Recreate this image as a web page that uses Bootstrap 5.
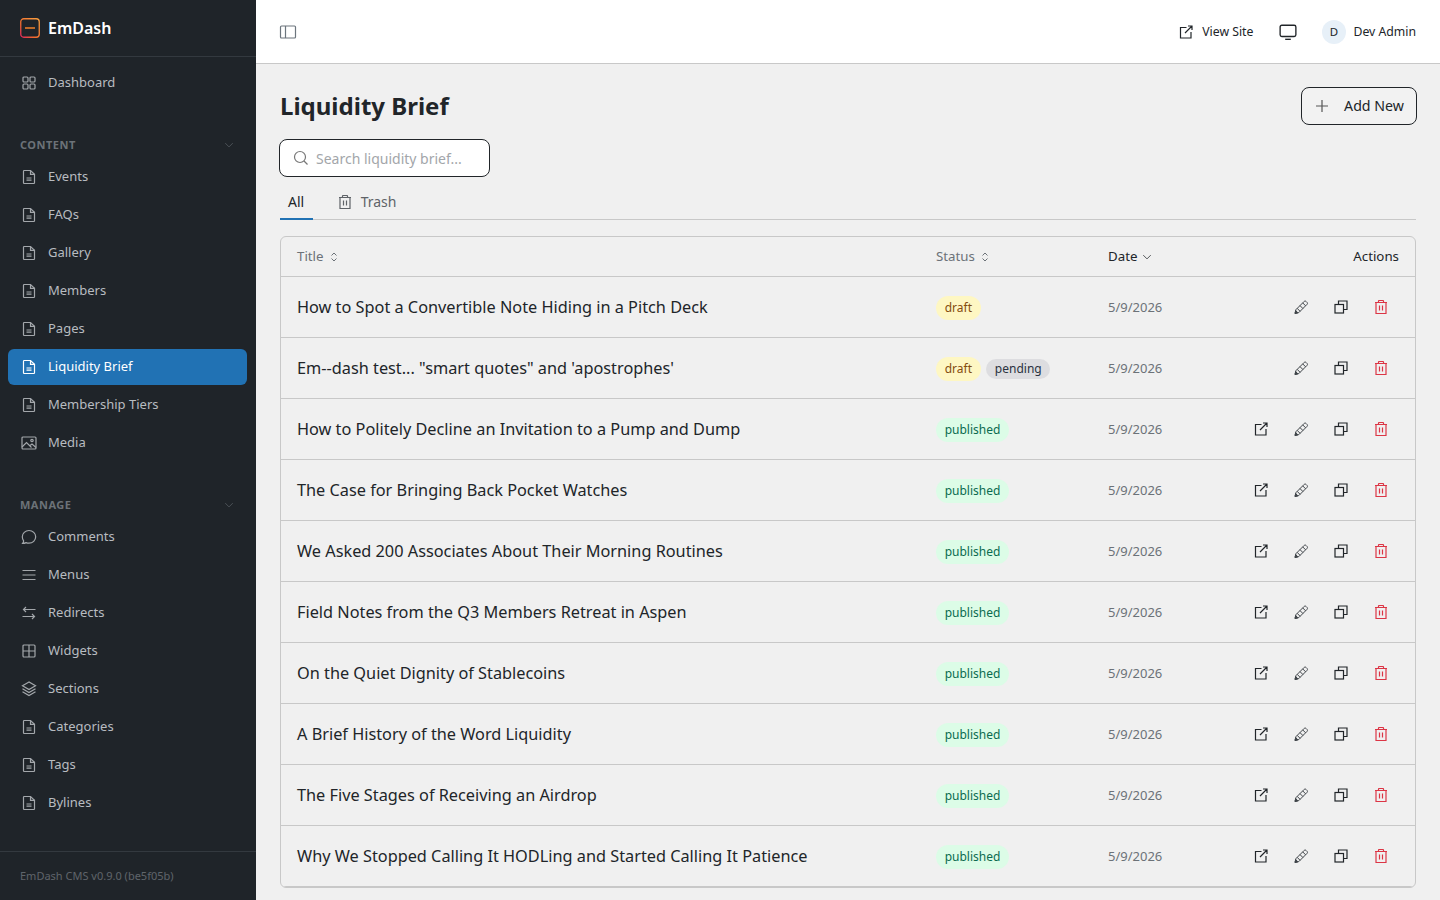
<!DOCTYPE html>
<html lang="en">
<head>
    <meta charset="UTF-8">
    <meta name="viewport" content="width=device-width, initial-scale=1">
    <link href="https://cdn.jsdelivr.net/npm/bootstrap@5.3.3/dist/css/bootstrap.min.css" rel="stylesheet">
    <title>Liquidity Brief - EmDash</title>
    <style>
        html, body { height: 100%; overflow: hidden; }
        body { font-family: "Noto Sans", sans-serif; background: #f0f0f0; color: #212529; }
        .ic { width: 16px; height: 16px; flex: none; fill: none; stroke: currentColor; stroke-width: 1.2; }
        .app-side { width: 256px; height: 900px; background: #1f2429; flex: none; }
        .side-brand { height: 57px; padding: 0 20px; border-bottom: 1px solid #33393f; color: #fff; font-size: 16px; font-weight: 600; gap: 8px; }
        .side-link { height: 36px; margin: 0 9px 2px 8px; padding: 0 12px 0 13px; gap: 11px; border-radius: 6px; font-size: 13px; color: #b8bcc0; text-decoration: none; }
        .side-link .ic { color: #a3a7ab; }
        .side-link.on { background: #2172b4; color: #fff; }
        .side-link.on .ic { color: #fff; }
        .side-head { padding: 0 21px 0 20px; height: 20px; margin: 32px 0 4px; font-size: 11px; font-weight: 700; letter-spacing: .5px; color: #6c7278; }
        .side-head .ic { width: 12px; height: 12px; color: #5a6066; stroke-width: 1; }
        .side-foot { height: 49px; padding-left: 20px; border-top: 1px solid #33393f; font-size: 11px; color: #5f656b; }
        .top-bar { height: 64px; background: #fff; border-bottom: 1px solid #c8c8c8; padding: 0 24px 0 23px; font-size: 12.25px; }
        .top-text { padding-top: 2px; }
        .top-avatar { width: 24px; height: 24px; border-radius: 50%; background: #e7f0f8; font-size: 11.5px; }
        .page-title { font-size: 24px; font-weight: 700; line-height: 32px; }
        .add-btn { width: 116px; height: 38px; margin-right: -1px; border: 1px solid #212529; border-radius: 8px; background: #f2f2f2; font-size: 14.2px; line-height: 20px; color: #212529; gap: 14px; padding: 0 0 1px; }
        .add-btn .ic { color: #555; margin-top: 1px; }
        .search-box { width: 211px; height: 38px; margin-left: -1px; background: #fff; border: 1px solid #212529; border-radius: 8px; padding: 0 13px; gap: 7px; font-size: 14px; color: #a3a6aa; }
        .search-box input { border: 0; outline: 0; padding: 0; width: 160px; font-size: 14px; background: none; }
        .search-box input::placeholder { color: #a3a6aa; opacity: 1; }
        .tab-bar { height: 43px; border-bottom: 1px solid #c8c8c8; margin-bottom: 16px; font-size: 14px; }
        .tab-item { height: 43px; margin-bottom: -1px; padding: 6px 8px 0; color: #5f6368; gap: 8px; text-decoration: none; }
        .tab-item.on { padding: 8px 8.5px 0 8px; color: #212529; border-bottom: 2px solid #2172b4; }
        .list-wrap { border: 1px solid #c8c8c8; border-radius: 6px; overflow: hidden; }
        .list-table { --bs-table-bg: transparent; table-layout: fixed; width: 100%; font-size: 13px; }
        .list-table th { height: 39px; padding: 2px 16px 0; font-size: 13.3px; font-weight: 400; color: #6c7278; border-bottom: 1px solid #c8c8c8; vertical-align: middle; }
        .list-table th .ic { width: 12px; height: 12px; margin-left: 1px; vertical-align: -2px; stroke-width: 1; }
        .list-table th.cur .ic { margin-left: 0; }
        .list-table th.act, .list-table th.cur { color: #212529; }
        .list-table td { height: 61px; padding: 0 16px; border-bottom: 1px solid #c8c8c8; vertical-align: middle; color: #6c7278; }
        .list-table td.row-title { padding-top: 2px; font-size: 16.3px; color: #212529; }
        .list-table td.row-tags, .list-table td.row-date { padding-top: 2px; }
        .tag { display: inline-block; height: 20px; line-height: 20px; padding: 0 8.7px; border-radius: 12px; font-size: 12px; margin-right: 5.5px; vertical-align: middle; }
        .tag-draft { height: 24px; line-height: 24px; background: #fef7c3; color: #854d0e; }
        .tag-pend { background: #dddde0; color: #2a3240; }
        .tag-pub { height: 24px; line-height: 24px; background: #dcfce7; color: #0a6b4f; }
        .row-acts { gap: 24px; margin-right: 10px; }
        .row-acts .ic { color: #212529; }
        .row-acts .edit { color: #3f4449; stroke-width: 1; }
        .row-acts .del { color: #dc3545; }
    </style>
</head>
<body>
    <svg width="0" height="0" class="position-absolute">
        <symbol id="doc" viewBox="0 0 16 16"><path d="M2.500 2.200c0-.4.3-.7.7-.7h6.300l4 3.800v8.500c0 .4-.3.7-.7.7H3.200c-.4 0-.7-.3-.7-.7z"/><path d="M9.500 1.500V5.300h4M5.500 9h5M5.500 11.200h5"/></symbol>
        <symbol id="grid" viewBox="0 0 16 16"><rect x="2" y="2" width="5" height="5" rx="1"/><rect x="9" y="2" width="5" height="5" rx="1"/><rect x="2" y="9" width="5" height="5" rx="1"/><rect x="9" y="9" width="5" height="5" rx="1"/></symbol>
        <symbol id="chev" viewBox="0 0 16 16"><path d="M3 5.500l5 5 5-5"/></symbol>
        <symbol id="sort" viewBox="0 0 12 12"><path d="M3.500 4.500L6 2l2.500 2.500M3.500 7.500L6 10l2.500-2.500"/></symbol>
        <symbol id="image" viewBox="0 0 16 16"><rect x="1" y="2" width="14" height="12" rx="1"/><circle cx="11" cy="5.500" r="1.200"/><path d="M1 12l4.500-4.500 5 5M9 10.500l2-1.500 4 3.500"/></symbol>
        <symbol id="chat" viewBox="0 0 16 16"><path d="M8 1.500c3.700 0 6.700 2.800 6.700 6.300S11.700 14.200 8 14.200c-1 0-2-.2-2.900-.6-1 .5-2.200.8-3.500.8.600-.8 1-1.700 1-2.500C1.900 10.800 1.300 9.400 1.300 7.800 1.300 4.300 4.300 1.500 8 1.500z"/></symbol>
        <symbol id="menu" viewBox="0 0 16 16"><path d="M1.500 3.500h13M1.500 8h13M1.500 12.500h13"/></symbol>
        <symbol id="swap" viewBox="0 0 16 16"><path d="M14.500 4.500h-12M5 2L2.500 4.500 5 7M1.500 11.500h12M11 9l2.500 2.500L11 14"/></symbol>
        <symbol id="table" viewBox="0 0 16 16"><rect x="2" y="2" width="12" height="12" rx="1"/><path d="M8 2v12M2 8h12"/></symbol>
        <symbol id="stack" viewBox="0 0 16 16"><path d="M8 1L1.500 4.800 8 8.600l6.500-3.800zM1.500 7.800L8 11.600l6.500-3.800M1.500 10.800L8 14.600l6.500-3.800"/></symbol>
        <symbol id="out" viewBox="0 0 16 16"><path d="M8.500 3.500H2.500v10.500H13V8M7 9l7-7M10 2h4v4"/></symbol>
        <symbol id="screen" viewBox="0 0 16 16"><rect x="1" y="2" width="14" height="10" rx="1.500"/><path d="M5.500 14.500h5"/></symbol>
        <symbol id="panel" viewBox="0 0 18 18"><rect x="1.500" y="3" width="15" height="12" rx="1"/><path d="M6.500 3v12"/></symbol>
        <symbol id="plus" viewBox="0 0 16 16"><path d="M8 2v12M2 8h12"/></symbol>
        <symbol id="find" viewBox="0 0 16 16"><circle cx="7" cy="7" r="5.500"/><path d="M11 11l3.500 3.500"/></symbol>
        <symbol id="bin" viewBox="0 0 16 16"><path d="M2 3.500h12M3 3.500V14.500h10V3.500M5.500 3.500V2c0-.3.200-.5.500-.5h4c.3 0 .5.200.5.500v1.500M6.500 6.500v5M9.500 6.500v5"/></symbol>
        <symbol id="pen" viewBox="0 0 16 16"><path d="M2 14.500l.9-3.800L11.200 2.400c.5-.5 1.300-.5 1.800 0l1.100 1.100c.5.500.5 1.300 0 1.800L5.800 13.600z"/><path d="M9.700 3.900l2.900 2.900M4.200 9.400l2.900 2.900M7 6.600l2.900 2.900"/><path d="M2 14.500l.7-2.900 2.200 2.200z" fill="currentColor"/></symbol>
        <symbol id="copy" viewBox="0 0 16 16"><rect x="2" y="5.500" width="8.500" height="8.500"/><path d="M5.500 5.500V2H14v8.500h-3.500"/></symbol>
    </svg>

    <div class="d-flex">
        <aside class="app-side d-flex flex-column">
            <div class="side-brand d-flex align-items-center">
                <svg width="20" height="20" viewBox="0 0 20 20" fill="none">
                    <defs><linearGradient id="logo" x1="0" y1="1" x2="1" y2="0"><stop offset="0" stop-color="#e0245e"/><stop offset=".35" stop-color="#f26a2e"/><stop offset="1" stop-color="#f9a03f"/></linearGradient></defs>
                    <rect x=".75" y=".75" width="18.500" height="18.500" rx="3" stroke="url(#logo)" stroke-width="1.300"/>
                    <path d="M5 10h10" stroke="#f5822a" stroke-width="1.500"/>
                </svg>
                <span>EmDash</span>
            </div>
            <div class="pt-2">
                <a class="side-link d-flex align-items-center" href="#"><svg class="ic"><use href="#grid"/></svg>Dashboard</a>
            </div>
            <div class="side-head d-flex align-items-center justify-content-between">CONTENT <svg class="ic"><use href="#chev"/></svg></div>
            <div>
                <a class="side-link d-flex align-items-center" href="#"><svg class="ic"><use href="#doc"/></svg>Events</a>
                <a class="side-link d-flex align-items-center" href="#"><svg class="ic"><use href="#doc"/></svg>FAQs</a>
                <a class="side-link d-flex align-items-center" href="#"><svg class="ic"><use href="#doc"/></svg>Gallery</a>
                <a class="side-link d-flex align-items-center" href="#"><svg class="ic"><use href="#doc"/></svg>Members</a>
                <a class="side-link d-flex align-items-center" href="#"><svg class="ic"><use href="#doc"/></svg>Pages</a>
                <a class="side-link on d-flex align-items-center" href="#"><svg class="ic"><use href="#doc"/></svg>Liquidity Brief</a>
                <a class="side-link d-flex align-items-center" href="#"><svg class="ic"><use href="#doc"/></svg>Membership Tiers</a>
                <a class="side-link d-flex align-items-center" href="#"><svg class="ic"><use href="#image"/></svg>Media</a>
            </div>
            <div class="side-head d-flex align-items-center justify-content-between">MANAGE <svg class="ic"><use href="#chev"/></svg></div>
            <div>
                <a class="side-link d-flex align-items-center" href="#"><svg class="ic"><use href="#chat"/></svg>Comments</a>
                <a class="side-link d-flex align-items-center" href="#"><svg class="ic"><use href="#menu"/></svg>Menus</a>
                <a class="side-link d-flex align-items-center" href="#"><svg class="ic"><use href="#swap"/></svg>Redirects</a>
                <a class="side-link d-flex align-items-center" href="#"><svg class="ic"><use href="#table"/></svg>Widgets</a>
                <a class="side-link d-flex align-items-center" href="#"><svg class="ic"><use href="#stack"/></svg>Sections</a>
                <a class="side-link d-flex align-items-center" href="#"><svg class="ic"><use href="#doc"/></svg>Categories</a>
                <a class="side-link d-flex align-items-center" href="#"><svg class="ic"><use href="#doc"/></svg>Tags</a>
                <a class="side-link d-flex align-items-center" href="#"><svg class="ic"><use href="#doc"/></svg>Bylines</a>
            </div>
            <div class="side-foot mt-auto d-flex align-items-center">EmDash CMS v0.9.0 (be5f05b)</div>
        </aside>

        <div class="flex-grow-1">
            <header class="top-bar d-flex align-items-center">
                <svg class="ic text-secondary" style="width:18px;height:18px"><use href="#panel"/></svg>
                <div class="ms-auto d-flex align-items-center">
                    <svg class="ic me-2"><use href="#out"/></svg><span class="top-text">View Site</span>
                    <svg class="ic" style="margin-left:25.500px;width:18px;height:18px"><use href="#screen"/></svg>
                    <span class="top-avatar d-flex align-items-center justify-content-center" style="margin-left:25px">D</span>
                    <span class="top-text" style="margin-left:7.500px">Dev Admin</span>
                </div>
            </header>
            <main class="px-4" style="padding-top:23px">
                <div class="d-flex align-items-center justify-content-between" style="margin-bottom:14px">
                    <h1 class="page-title mb-0">Liquidity Brief</h1>
                    <button class="add-btn d-flex align-items-center justify-content-center" type="button"><svg class="ic"><use href="#plus"/></svg>Add New</button>
                </div>
                <div class="search-box d-flex align-items-center">
                    <svg class="ic" style="color:#777"><use href="#find"/></svg>
                    <input type="text" placeholder="Search liquidity brief...">
                </div>
                <div class="tab-bar d-flex gap-3">
                    <a class="tab-item on d-flex align-items-center" href="#">All</a>
                    <a class="tab-item d-flex align-items-center" href="#"><svg class="ic"><use href="#bin"/></svg>Trash</a>
                </div>
                <div class="list-wrap">
                    <table class="table list-table mb-0">
                        <colgroup><col style="width:639px"><col style="width:172px"><col style="width:130px"><col></colgroup>
                        <thead>
                            <tr>
                                <th>Title <svg class="ic"><use href="#sort"/></svg></th>
                                <th>Status <svg class="ic"><use href="#sort"/></svg></th>
                                <th class="cur">Date <svg class="ic"><use href="#chev"/></svg></th>
                                <th class="act text-end">Actions</th>
                            </tr>
                        </thead>
                        <tbody id="rows"></tbody>
                    </table>
                </div>
            </main>
        </div>
    </div>

    <script>
        const posts = [
            ['How to Spot a Convertible Note Hiding in a Pitch Deck', 'draft'],
            ['Em--dash test... "smart quotes" and \'apostrophes\'', 'pending'],
            ['How to Politely Decline an Invitation to a Pump and Dump', 'published'],
            ['The Case for Bringing Back Pocket Watches', 'published'],
            ['We Asked 200 Associates About Their Morning Routines', 'published'],
            ['Field Notes from the Q3 Members Retreat in Aspen', 'published'],
            ['On the Quiet Dignity of Stablecoins', 'published'],
            ['A Brief History of the Word Liquidity', 'published'],
            ['The Five Stages of Receiving an Airdrop', 'published'],
            ['Why We Stopped Calling It HODLing and Started Calling It Patience', 'published']
        ];
        const icon = (name, cls = '') => `<svg class="ic ${cls}"><use href="#${name}"/></svg>`;
        document.getElementById('rows').innerHTML = posts.map(([title, state]) => {
            let tags = '<span class="tag tag-pub">published</span>';
            if (state === 'draft') tags = '<span class="tag tag-draft">draft</span>';
            if (state === 'pending') tags = '<span class="tag tag-draft">draft</span><span class="tag tag-pend">pending</span>';
            const view = state === 'published' ? icon('out') : '';
            return `<tr>
                <td class="row-title"></td>
                <td class="row-tags">${tags}</td>
                <td class="row-date">5/9/2026</td>
                <td><div class="row-acts d-flex justify-content-end">${view}${icon('pen', 'edit')}${icon('copy')}${icon('bin', 'del')}</div></td>
            </tr>`;
        }).join('');
        // titles go in as text so the quotes stay literal
        document.querySelectorAll('#rows .row-title').forEach((cell, i) => { cell.textContent = posts[i][0]; });
    </script>
</body>
</html>
